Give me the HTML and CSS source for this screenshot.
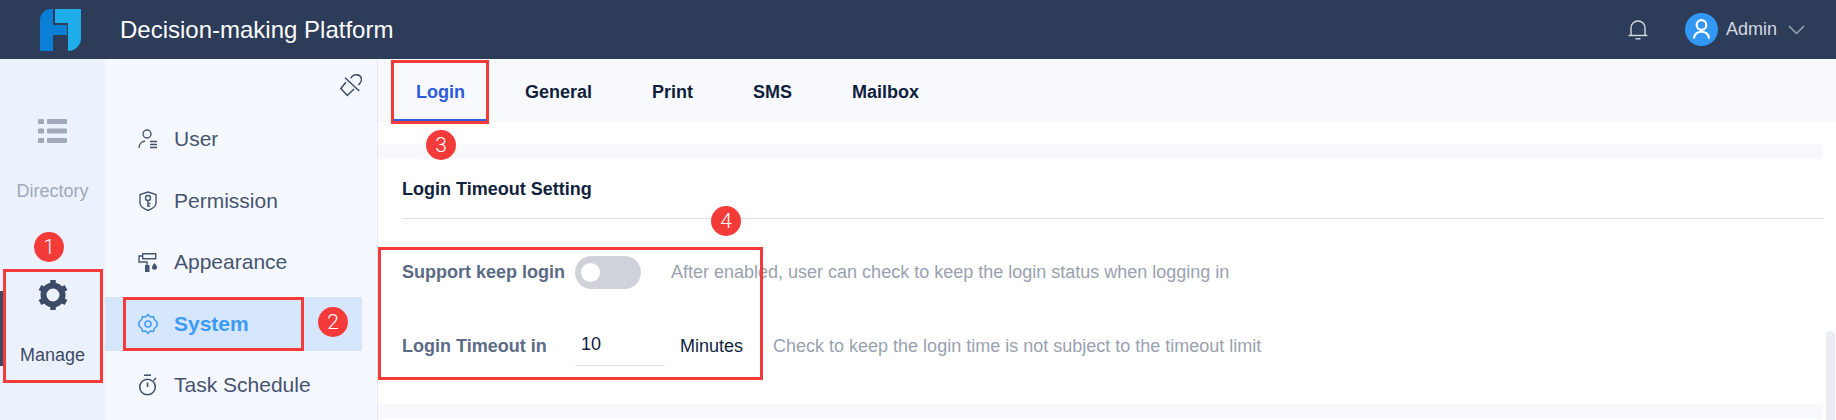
FILE: index.html
```html
<!DOCTYPE html>
<html lang="en">
<head>
    <meta charset="UTF-8">
    <title>Decision-making Platform</title>
    <link rel="stylesheet" href="styles.css">
</head>
<body>
    <header class="topbar">
        <svg class="logo" width="42" height="42" viewBox="0 0 42 42">
            <path fill="#0a7fd6" d="M0 11A11 11 0 0 1 11 0h2v16h14v10H13v16H0z"/>
            <path fill="#1fade9" d="M15 0h26v29a13 13 0 0 1-13 13V14H15z"/>
        </svg>
        <div class="product">Decision-making Platform</div>
        <svg class="bell" width="22" height="22" viewBox="0 0 22 22" fill="none" stroke="#d5d9e0" stroke-width="1.4">
            <path d="M4 16V9a7 7 0 0 1 14 0v7"/>
            <path d="M1.500 16.500h19"/>
            <path d="M8.500 19.800h5"/>
        </svg>
        <div class="avatar">
            <svg width="33" height="33" viewBox="0 0 33 33" fill="none" stroke="#fff" stroke-width="2.200">
                <circle cx="16.500" cy="12" r="4.800"/>
                <path d="M9 25.500c0-9 15-9 15 0"/>
            </svg>
        </div>
        <span class="username">Admin</span>
        <svg class="chevron" width="17" height="10" viewBox="0 0 17 10" fill="none" stroke="#9aa3b2" stroke-width="1.500">
            <path d="M1 1l7.500 7.500L16 1"/>
        </svg>
    </header>

    <div class="layout">
        <nav class="rail">
            <div class="rail-item">
                <svg width="29" height="24" viewBox="0 0 29 24" fill="#a0a9b9">
                    <rect x="0" y="0" width="6" height="5" rx="1"/>
                    <rect x="9" y="0" width="20" height="5" rx="1"/>
                    <rect x="0" y="9.500" width="6" height="5" rx="1"/>
                    <rect x="9" y="9.500" width="20" height="5" rx="1"/>
                    <rect x="0" y="19" width="6" height="5" rx="1"/>
                    <rect x="9" y="19" width="20" height="5" rx="1"/>
                </svg>
                <span class="rail-label">Directory</span>
            </div>
            <div class="rail-item rail-active">
                <svg width="32" height="32" viewBox="0 0 32 32" fill="none" stroke="#3d4b66">
                    <circle cx="16" cy="16" r="9.500" stroke-width="6"/>
                    <g stroke-width="5.500">
                        <path d="M16 1v4"/>
                        <path d="M16 27v4"/>
                        <path d="M3 8.500l3.500 2"/>
                        <path d="M25.500 21.500l3.500 2"/>
                        <path d="M3 23.500l3.500-2"/>
                        <path d="M25.500 10.500l3.500-2"/>
                    </g>
                </svg>
                <span class="rail-label">Manage</span>
            </div>
        </nav>

        <aside class="sidebar">
            <div class="pin-row">
                <svg width="22" height="23" viewBox="0 0 22 23" fill="none" stroke="#3d4b66" stroke-width="1.500">
                    <path d="M5 3.700L19.300 17"/>
                    <path d="M6 8.300L.8 14.500l6.500 7 6.700-6.500"/>
                    <path d="M10.700 4.300c1.800-3.800 7.300-4.800 9.800-1.800 2 3 .3 6.500-2.200 8.500"/>
                </svg>
            </div>
            <ul class="menu">
                <li class="menu-item">
                    <svg width="20" height="20" viewBox="0 0 20 20" fill="none" stroke="#46556f" stroke-width="1.400">
                        <circle cx="9" cy="5" r="4"/>
                        <path d="M1 19c0-4 3-6.500 6-7"/>
                        <path d="M12 12.500h7M12 15.500h7M12 18.500h7"/>
                    </svg>
                    User
                </li>
                <li class="menu-item">
                    <svg width="20" height="20" viewBox="0 0 20 20" fill="none" stroke="#46556f" stroke-width="1.400">
                        <path d="M10 1l8 2.500V12c0 3.500-4 6-8 7.500C6 18 2 15.500 2 12V3.500z"/>
                        <circle cx="10" cy="7" r="2.500"/>
                        <path d="M10 9.500V16M10 12.500h2.500M10 15h2"/>
                    </svg>
                    Permission
                </li>
                <li class="menu-item">
                    <svg width="20" height="20" viewBox="0 0 20 20" fill="#46556f">
                        <path d="M4.700 1.700h13v5h-13z" fill="none" stroke="#46556f" stroke-width="1.400"/>
                        <path d="M4.700 4H1v6h8v3" fill="none" stroke="#46556f" stroke-width="1.400"/>
                        <rect x="7" y="13" width="4.500" height="7" rx="0.500"/>
                        <path d="M16.500 11c1.500 2 2.500 3 2.500 4.300a2.500 2.500 0 0 1-5 0c0-1.300 1-2.300 2.500-4.300z"/>
                    </svg>
                    Appearance
                </li>
                <li class="menu-item menu-active">
                    <svg width="20" height="22" viewBox="0 0 20 22" fill="none" stroke="#3d9bf8" stroke-width="1.500">
                        <path d="M10 1.500l2.300 2.500 3.200-.5 1 3.200L19 9v4l-2.500 2.300-1 3.200-3.200-.5L10 20.500 7.700 18l-3.200.5-1-3.200L1 13V9l2.500-2.300 1-3.200 3.200.5z"/>
                        <circle cx="10" cy="11" r="3"/>
                    </svg>
                    System
                </li>
                <li class="menu-item">
                    <svg width="20" height="22" viewBox="0 0 20 22" fill="none" stroke="#46556f" stroke-width="1.600">
                        <circle cx="9.500" cy="13" r="7.800"/>
                        <path d="M9.500 8.500V13"/>
                        <path d="M6 1.200h7"/>
                        <path d="M15.500 6.500l2.500-2.500"/>
                    </svg>
                    Task Schedule
                </li>
            </ul>
        </aside>

        <main class="content">
            <div class="tabs">
                <div class="tab tab-active">Login</div>
                <div class="tab">General</div>
                <div class="tab">Print</div>
                <div class="tab">SMS</div>
                <div class="tab">Mailbox</div>
            </div>
            <div class="band band-top"></div>
            <section class="panel">
                <h2 class="panel-title">Login Timeout Setting</h2>
                <div class="form-row row-keep">
                    <span class="field-label">Support keep login</span>
                    <span class="switch"><span class="knob"></span></span>
                    <span class="hint hint-keep">After enabled, user can check to keep the login status when logging in</span>
                </div>
                <div class="form-row row-timeout">
                    <span class="field-label">Login Timeout in</span>
                    <span class="number-input">10</span>
                    <span class="unit">Minutes</span>
                    <span class="hint hint-timeout">Check to keep the login time is not subject to the timeout limit</span>
                </div>
            </section>
            <div class="band"></div>
            <div class="scroll-thumb"></div>
        </main>
    </div>

    <!-- red markers on top of the screenshot -->
    <div class="mark mark-manage"></div>
    <div class="mark mark-system"></div>
    <div class="mark mark-login"></div>
    <div class="mark mark-form"></div>
    <div class="badge badge-1">1</div>
    <div class="badge badge-2">2</div>
    <div class="badge badge-3">3</div>
    <div class="badge badge-4">4</div>
</body>
</html>
```

FILE: styles.css
```css
* {
    box-sizing: border-box;
}
html, body {
    height: 100%;
}
body {
    margin: 0;
    overflow: hidden;
    position: relative;
    font-family: 'Liberation Sans', Arial, sans-serif;
    background: #fff;
}
.topbar {
    height: 59px;
    background: #2c3c59;
    display: flex;
    align-items: center;
    padding-left: 40px;
}
.logo {
    margin-right: 38px;
}
.product {
    color: #fff;
    font-size: 24px;
    flex: 1;
}
.bell {
    margin-right: 36px;
}
.avatar {
    width: 33px;
    height: 33px;
    border-radius: 50%;
    background: #3398f5;
    margin-right: 8px;
}
.avatar svg {
    display: block;
}
.username {
    color: #d5d9e0;
    font-size: 18px;
    margin-right: 11px;
}
.chevron {
    margin-right: 31px;
}
.layout {
    display: flex;
    height: 361px;
}
.rail {
    width: 105px;
    background: #ecf2fd;
    padding-top: 60px;
}
.rail-item {
    display: flex;
    flex-direction: column;
    align-items: center;
    color: #a0a9b9;
    position: relative;
}
.rail-item svg {
    display: block;
}
.rail-label {
    font-size: 18px;
    line-height: 20px;
    margin-top: 38px;
}
.rail-active {
    margin-top: 78px;
    color: #3d4b66;
}
.rail-active::before {
    content: "";
    position: absolute;
    left: 0;
    top: 12px;
    width: 3px;
    height: 75px;
    background: #3d4a63;
}
.rail-active .rail-label {
    margin-top: 34px;
}
.sidebar {
    width: 273px;
    background: #f5f8ff;
    border-right: 1px solid #e6e9f0;
    padding-top: 15px;
}
.pin-row {
    display: flex;
    justify-content: flex-end;
    padding-right: 15px;
    height: 22px;
}
.menu {
    list-style: none;
    margin: 16px 0 0;
    padding: 0;
}
.menu-item {
    display: flex;
    align-items: center;
    width: 257px;
    height: 54px;
    margin-bottom: 7.600px;
    padding-left: 33px;
    gap: 16px;
    font-size: 21px;
    color: #46556f;
}
.menu-active {
    background: #d6e6fd;
    color: #3d9bf8;
    font-weight: bold;
}
.content {
    flex: 1;
    position: relative;
}
.tabs {
    height: 63px;
    background: #f8f9fd;
    display: flex;
    padding-left: 14px;
}
.tab {
    padding: 0 30px;
    font-size: 18px;
    font-weight: bold;
    color: #101f3c;
    line-height: 66px;
}
.tab-active {
    padding: 0 24px;
    margin-right: 6px;
    color: #2c5bdc;
    border-bottom: 3px solid #2c5bdc;
}
.band {
    height: 15px;
    width: 1445px;
    background: #f8f9fd;
}
.band-top {
    margin-top: 22px;
}
.panel {
    height: 245px;
    padding-left: 24px;
    width: 1445px;
}
.panel-title {
    margin: 0;
    height: 60px;
    line-height: 60px;
    font-size: 18px;
    font-weight: bold;
    color: #101f3c;
    border-bottom: 1px solid #dcdee3;
}
.form-row {
    display: flex;
    align-items: center;
}
.row-keep {
    margin-top: 37px;
    height: 33px;
}
.row-timeout {
    margin-top: 39px;
    height: 36px;
}
.field-label {
    width: 173px;
    font-size: 18px;
    font-weight: bold;
    color: #5b6b84;
}
.switch {
    width: 66px;
    height: 33px;
    border-radius: 17px;
    background: #cfd2d9;
    display: flex;
    align-items: center;
    padding-left: 6px;
}
.knob {
    width: 19px;
    height: 19px;
    border-radius: 50%;
    background: #fff;
}
.hint {
    color: #99a2b0;
    font-size: 18px;
}
.hint-keep {
    margin-left: 30px;
}
.number-input {
    width: 90px;
    height: 40px;
    padding-left: 6px;
    line-height: 37px;
    font-size: 18px;
    color: #101f3c;
    border-bottom: 1px solid #dcdee3;
}
.unit {
    margin-left: 15px;
    font-size: 18px;
    color: #101f3c;
}
.hint-timeout {
    margin-left: 30px;
}
.scroll-thumb {
    position: absolute;
    right: 1px;
    top: 272px;
    width: 9px;
    height: 89px;
    border-radius: 4px 4px 0 0;
    background: #ecedf3;
}
.mark {
    position: absolute;
    border: 3px solid #f53a3a;
}
.mark-manage {
    left: 3px;
    top: 269px;
    width: 100px;
    height: 114px;
}
.mark-system {
    left: 123px;
    top: 297px;
    width: 181px;
    height: 54px;
}
.mark-login {
    left: 391px;
    top: 60px;
    width: 98px;
    height: 64px;
}
.mark-form {
    left: 378px;
    top: 247px;
    width: 385px;
    height: 133px;
}
.badge {
    position: absolute;
    width: 30px;
    height: 30px;
    border-radius: 50%;
    background: #f53a3a;
    color: #fff;
    font-size: 21px;
    font-weight: 300;
    font-family: Roboto, 'Liberation Sans', sans-serif;
    display: flex;
    align-items: center;
    justify-content: center;
}
.badge-1 {
    left: 34px;
    top: 232px;
}
.badge-2 {
    left: 318px;
    top: 307px;
}
.badge-3 {
    left: 426px;
    top: 130px;
}
.badge-4 {
    left: 711px;
    top: 206px;
}
```
